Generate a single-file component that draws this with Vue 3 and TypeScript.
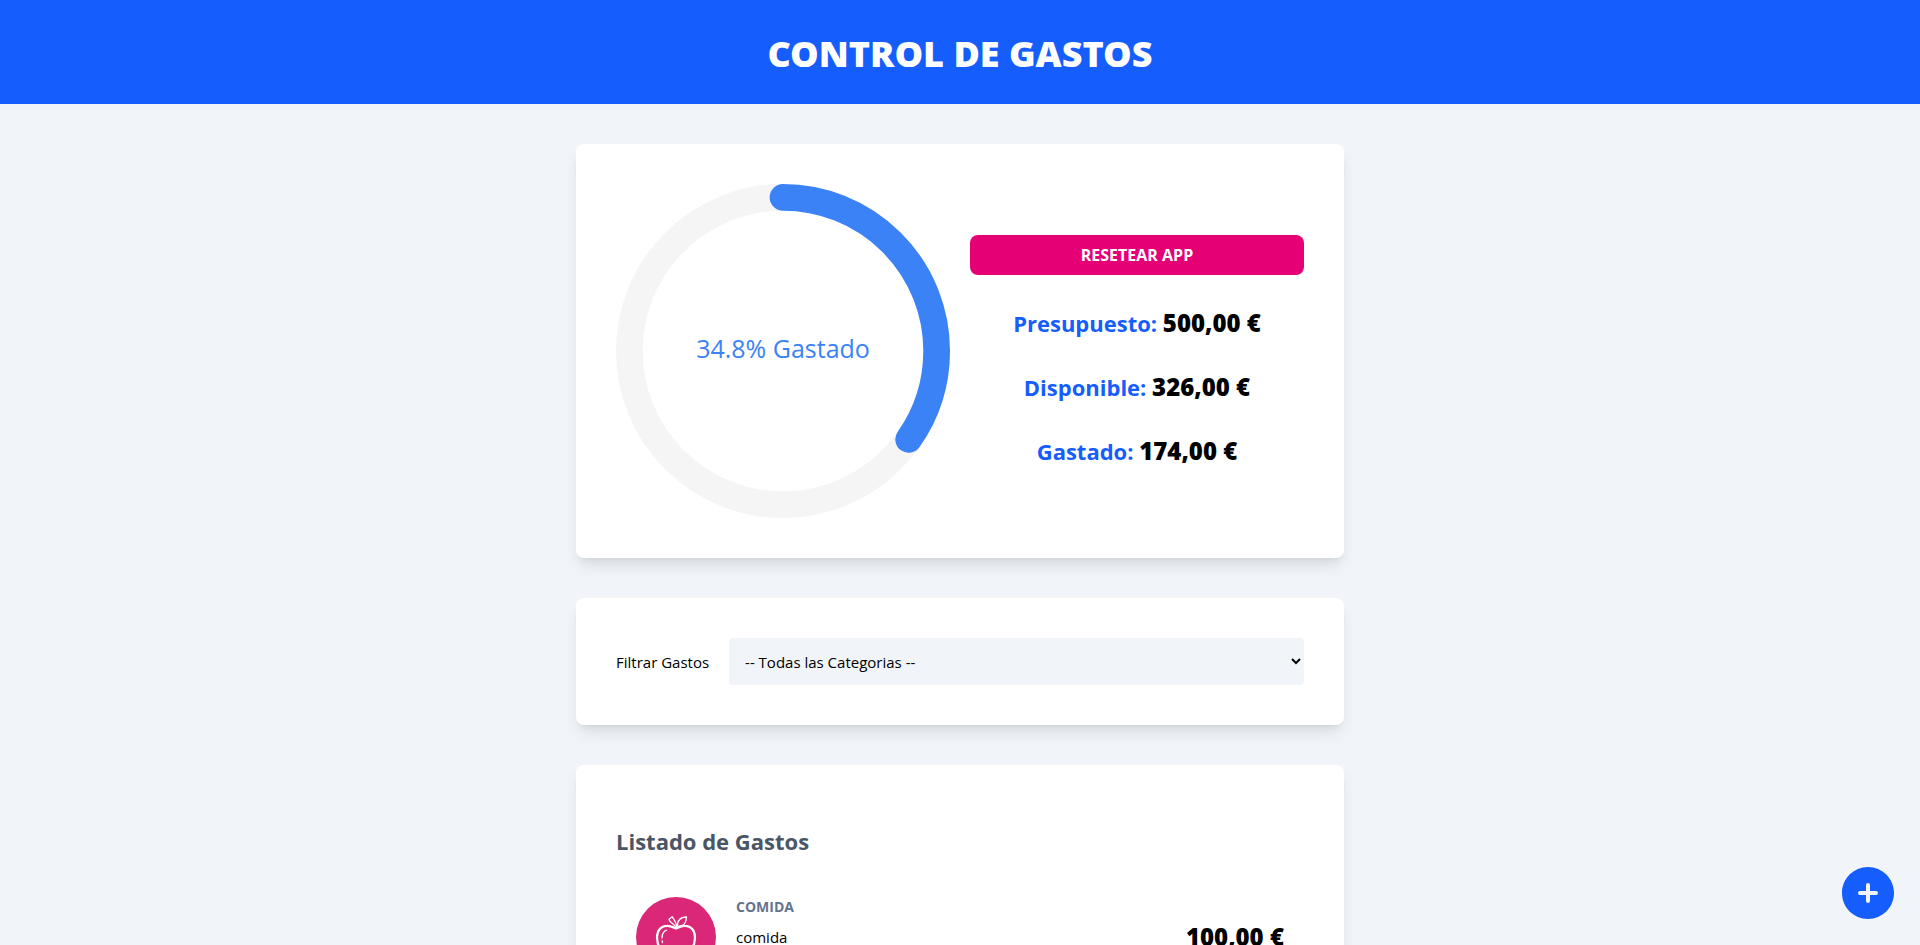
<script setup lang="ts">
import { computed, ref } from 'vue'

interface Expense {
  id: number
  category: string
  name: string
  amount: number
}

const budget = ref(500)
const spent = ref(174)
const available = computed(() => budget.value - spent.value)
const percentage = computed(() => (budget.value ? +((spent.value / budget.value) * 100).toFixed(2) : 0))

const categories = ['Ahorro', 'Comida', 'Casa', 'Gastos Varios', 'Ocio', 'Salud', 'Suscripciones']
const selected = ref('')

const expenses = ref<Expense[]>([{ id: 1, category: 'Comida', name: 'comida', amount: 100 }])
const visibleExpenses = computed(() =>
  expenses.value.filter((e) => !selected.value || e.category === selected.value),
)

const summary = computed(() => [
  { label: 'Presupuesto', amount: budget.value },
  { label: 'Disponible', amount: available.value },
  { label: 'Gastado', amount: spent.value },
])

function formatCurrency(amount: number): string {
  return `${amount.toFixed(2).replace('.', ',')} €`
}

function resetApp(): void {
  budget.value = 0
  spent.value = 0
  expenses.value = []
}
</script>

<template>
  <div class="app">
    <header class="header">
      <h1 class="title">Control de Gastos</h1>
    </header>

    <main class="main">
      <section class="card tracker">
        <div class="ring">
          <svg class="ring-chart" viewBox="0 0 100 100" aria-hidden="true">
            <circle class="trail" cx="50" cy="50" r="46" />
            <circle
              class="progress"
              cx="50"
              cy="50"
              r="46"
              pathLength="100"
              :stroke-dasharray="`${percentage} 100`"
              transform="rotate(-90 50 50)"
            />
          </svg>
          <span class="ring-label">{{ percentage }}% Gastado</span>
        </div>
        <div class="totals">
          <button class="reset" type="button" @click="resetApp">Resetear App</button>
          <p v-for="item in summary" :key="item.label" class="total">
            {{ item.label }}: <span class="amount">{{ formatCurrency(item.amount) }}</span>
          </p>
        </div>
      </section>

      <form class="card filter" @submit.prevent>
        <label for="category">Filtrar Gastos</label>
        <select id="category" v-model="selected" class="select">
          <option value="">-- Todas las Categorias --</option>
          <option v-for="c in categories" :key="c" :value="c">{{ c }}</option>
        </select>
      </form>

      <section class="card">
        <h2 class="list-title">Listado de Gastos</h2>
        <article v-for="e in visibleExpenses" :key="e.id" class="expense">
          <svg class="expense-icon" viewBox="0 0 80 80" aria-hidden="true">
            <circle cx="40" cy="40" r="40" fill="#db2777" />
            <g fill="none" stroke="#fff" stroke-width="1.3" stroke-linecap="round" stroke-linejoin="round">
              <path
                stroke-width="2.2"
                d="M40 31.5C37 30 34 28.6 31 28.8C24.5 29 21 34 21 40.5C21 48 25.500 58 32 60C35 61 37.5 59.2 40 59.2S45 61 48 60C54.5 58 59 48 59 40.5C59 34 55.5 29 49 28.8C46 28.6 43 30 40 31.5Z"
              />
              <path d="M40.7 31C41 27 39 23.500 36.2 19.8L33 22.3C33.5 25.300 37 26 39.700 30" />
              <path d="M41.500 29.500C41 23.500 44.500 20 50.500 20C50.500 25.500 47.500 29.500 41.500 29.500Z" />
              <path d="M30.500 33.200C27.500 34.500 26 37.500 26 41M26.200 44L26.500 45.500" />
            </g>
          </svg>
          <div class="expense-info">
            <p class="expense-category">{{ e.category }}</p>
            <p class="expense-name">{{ e.name }}</p>
          </div>
          <p class="amount">{{ formatCurrency(e.amount) }}</p>
        </article>
      </section>
    </main>

    <button class="add" type="button" aria-label="Nuevo gasto">
      <svg class="add-icon" viewBox="0 0 24 24" fill="currentColor" aria-hidden="true">
        <path
          fill-rule="evenodd"
          clip-rule="evenodd"
          d="M12 2.25c-5.385 0-9.75 4.365-9.75 9.75s4.365 9.75 9.75 9.75 9.75-4.365 9.75-9.75S17.385 2.25 12 2.25ZM12.75 9a.75.75 0 0 0-1.5 0v2.25H9a.75.75 0 0 0 0 1.5h2.25V15a.75.75 0 0 0 1.5 0v-2.25H15a.75.75 0 0 0 0-1.5h-2.25V9Z"
        />
      </svg>
    </button>
  </div>
</template>

<style>
body {
  margin: 0;
  background: #f1f5f9;
}

*,
*::before,
*::after {
  box-sizing: border-box;
}
</style>

<style scoped>
.app {
  min-height: 100vh;
  color: #000;
  font: 15px/24px 'Open Sans', 'Noto Sans', sans-serif;
}

h1,
h2,
p {
  margin: 0;
}

button,
select {
  border: 0;
  color: inherit;
  font: inherit;
}

button {
  cursor: pointer;
}

.header {
  padding: 34px 0 30px;
  background: #155dfc;
}

.title {
  color: #fff;
  font-family: 'Noto Sans', sans-serif;
  font-size: 36px;
  font-weight: 900;
  line-height: 40px;
  text-align: center;
  text-transform: uppercase;
}

.main {
  display: flex;
  flex-direction: column;
  gap: 40px;
  max-width: 768px;
  margin: 0 auto;
  padding: 40px 0;
}

.card {
  padding: 40px;
  border-radius: 8px;
  background: #fff;
  box-shadow:
    0 10px 15px -3px rgb(0 0 0 / 10%),
    0 4px 6px -4px rgb(0 0 0 / 10%);
}

.tracker {
  display: grid;
  grid-template-columns: 1fr 1fr;
  align-items: center;
  gap: 20px;
}

.ring {
  display: grid;
  place-items: center;
}

.ring-chart,
.ring-label {
  grid-area: 1 / 1;
}

.ring-chart {
  display: block;
  width: 100%;
}

.trail,
.progress {
  fill: none;
  stroke-width: 8;
}

.trail {
  stroke: #f5f5f5;
}

.progress {
  stroke: #3b82f6;
  stroke-linecap: round;
}

.ring-label {
  padding-bottom: 6px;
  color: #3b82f6;
  font-size: 25px;
}

.totals {
  display: flex;
  flex-direction: column;
  gap: 32px;
}

.reset {
  padding: 8px;
  border-radius: 8px;
  background: #e60076;
  color: #fff;
  font-size: 16px;
  font-weight: 700;
  text-transform: uppercase;
}

.total {
  color: #155dfc;
  font-size: 22px;
  font-weight: 700;
  line-height: 32px;
  text-align: center;
}

.amount {
  color: #000;
  font-family: 'Noto Sans', sans-serif;
  font-size: 24px;
  font-weight: 900;
  line-height: 32px;
}

.filter {
  display: flex;
  align-items: center;
  gap: 20px;
}

.select {
  flex: 1;
  height: 47px;
  padding: 12px;
  border-radius: 4px;
  background: #f1f5f9;
}

.list-title {
  margin: 20px 0;
  color: #4a5565;
  font-size: 22px;
  font-weight: 700;
  line-height: 32px;
}

.expense {
  display: flex;
  align-items: center;
  gap: 20px;
  padding: 20px;
}

.expense-icon {
  flex: none;
  width: 80px;
  height: 80px;
}

.expense-info {
  display: flex;
  flex: 1;
  flex-direction: column;
  align-self: flex-start;
  gap: 8px;
}

.expense-category {
  color: #62748e;
  font-size: 14px;
  font-weight: 700;
  line-height: 20px;
  text-transform: uppercase;
}

.add {
  position: fixed;
  right: 20px;
  bottom: 20px;
  padding: 0;
  background: none;
  color: #155dfc;
}

.add-icon {
  display: block;
  width: 64px;
  height: 64px;
}
</style>
